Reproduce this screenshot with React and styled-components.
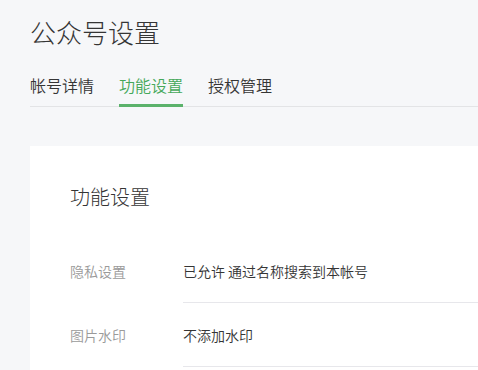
import React from "react"
import styled, { createGlobalStyle } from "styled-components"

const GlobalStyle = createGlobalStyle`
  html, body {
    margin: 0;
    padding: 0;
    background: #f6f7f9;
    overflow: hidden;
  }
  body {
    font-family: "Noto Sans CJK SC", "Noto Sans", sans-serif;
    color: #353535;
  }
`

const Page = styled.div`
  padding: 14px 0 0 30px;
`

const PageTitle = styled.h1`
  margin: 0;
  font-size: 26px;
  line-height: 36px;
  font-weight: 300;
  color: #353535;
`

const TabBar = styled.nav`
  display: flex;
  gap: 25px;
  margin-top: 16px;
  border-bottom: 1px solid #e3e4e6;
`

const Tab = styled.a`
  display: block;
  font-size: 16px;
  line-height: 38px;
  font-weight: 350;
  margin-bottom: -1px;
  border-bottom: 3px solid ${(p) => (p.active ? "#5bb26b" : "transparent")};
  color: ${(p) => (p.active ? "#45a85a" : "#353535")};
  cursor: pointer;
`

const Card = styled.section`
  box-sizing: border-box;
  margin-top: 39px;
  background: #fff;
  padding: 37px 0 0 40px;
  height: 224px;
`

const CardTitle = styled.h2`
  margin: 0 0 28px;
  font-size: 20px;
  line-height: 28px;
  font-weight: 300;
  color: #353535;
`

const Row = styled.div`
  display: grid;
  grid-template-columns: 113px 1fr;
  font-size: 14px;
  line-height: 20px;
  font-weight: 350;
`

const Label = styled.div`
  padding: 22px 0 21px;
  color: #9a9a9a;
`

const Value = styled.div`
  padding: 22px 0 21px;
  color: #353535;
  border-bottom: 1px solid #e7e7eb;
`

const tabs = ["帐号详情", "功能设置", "授权管理"]

const settings = [
  { label: "隐私设置", value: "已允许 通过名称搜索到本帐号" },
  { label: "图片水印", value: "不添加水印" },
]

export default function App() {
  return (
    <>
      <GlobalStyle />
      <Page>
        <PageTitle>公众号设置</PageTitle>
        <TabBar>
          {tabs.map((t) => (
            <Tab key={t} active={t === "功能设置"}>
              {t}
            </Tab>
          ))}
        </TabBar>
        <Card>
          <CardTitle>功能设置</CardTitle>
          {settings.map((s) => (
            <Row key={s.label}>
              <Label>{s.label}</Label>
              <Value>{s.value}</Value>
            </Row>
          ))}
        </Card>
      </Page>
    </>
  )
}
